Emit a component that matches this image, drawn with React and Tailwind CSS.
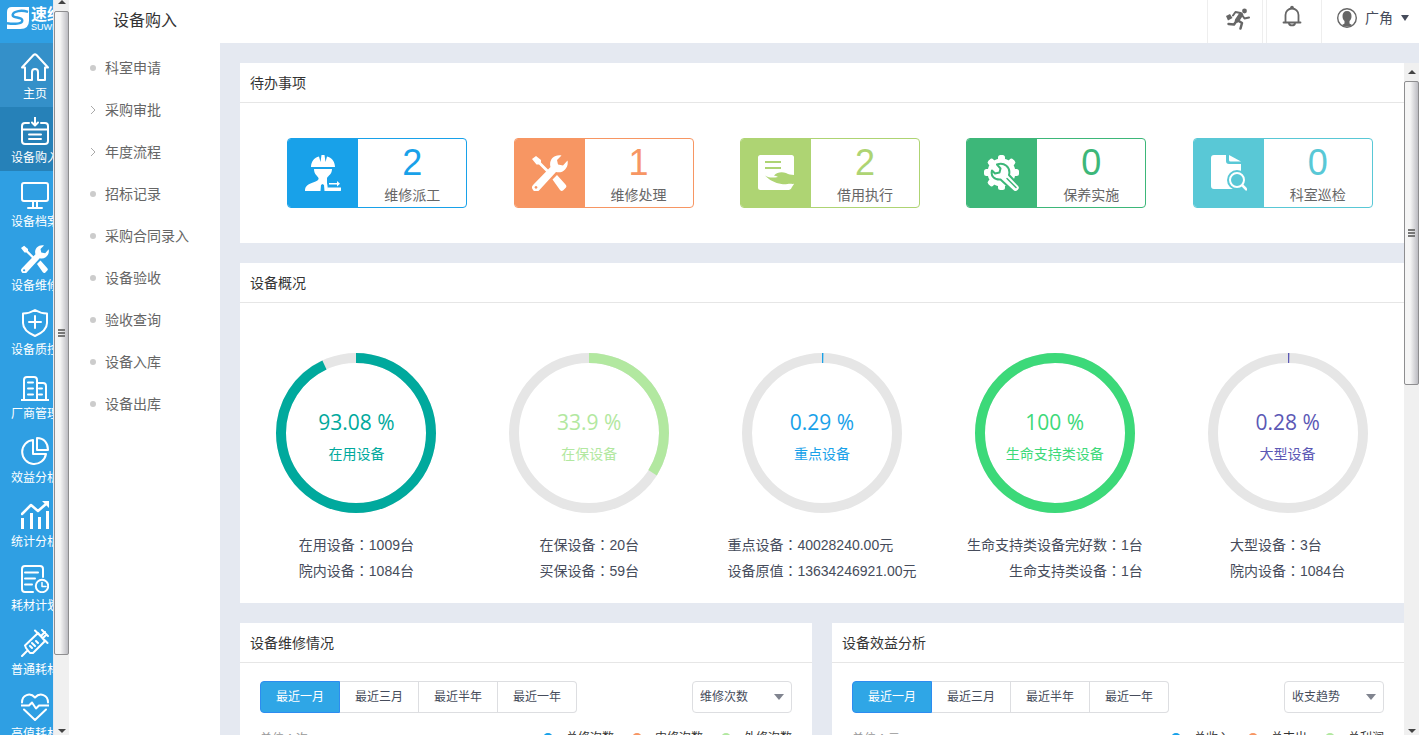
const stroke = {
  fill: "none",
  stroke: "currentColor",
  strokeWidth: 2,
  strokeLinecap: "round",
  strokeLinejoin: "round",
};

function SideIcon({ children }) {
  return (
    <svg className="size-7" viewBox="0 0 28 28" {...stroke} aria-hidden="true">
      {children}
    </svg>
  );
}

function Tools() {
  return (
    <g fill="#fff" stroke="none">
      <path d="M0 4 4 1l5 4v2.500l9 9-2 2-9-9H4.500z" />
      <path d="M20.500 24.500 25 20l8.500 9.500q1.500 1.500.5 3l-3 3q-1.500 1-3-.5z" />
      <path
        fillRule="evenodd"
        d="M29.500.5C22-1 16.500 5 18.500 12L1.500 29.500a4 4 0 0 0 5.500 6L24 17c7 2 13-4.500 11.500-11.500L31 10.500l-5-1-1-4.500zM4 31a1.400 1.400 0 1 1-.01 0z"
      />
    </g>
  );
}

const navItems = [
  {
    label: "主页",
    bg: "bg-[#3490c9]",
    icon: <path d="M1 14.500 12.500 2q1.500-1.300 3 0L27 14.500h-3V27h-7v-8a3 3 0 0 0-6 0v8H4V14.500z" />,
  },
  {
    label: "设备购入",
    bg: "bg-[#2681b8]",
    icon: (
      <>
        <path d="M8 6H4a3 3 0 0 0-3 3v15a3 3 0 0 0 3 3h20a3 3 0 0 0 3-3V9a3 3 0 0 0-3-3h-4M1 12.500h26M8 17.500h12M8 22h12" />
        <path d="M14 0v8M11 5.500l3 3 3-3" />
      </>
    ),
  },
  {
    label: "设备档案",
    icon: (
      <>
        <rect x="1" y="2" width="26" height="18" rx="2" />
        <path d="M12 21v5M16 21v5M7 27h14" />
      </>
    ),
  },
  {
    label: "设备维修",
    icon: (
      <g transform="scale(.78)">
        <Tools />
      </g>
    ),
  },
  {
    label: "设备质控",
    icon: (
      <path d="M14 1c4 2.500 8 3.500 12 3.500V14c0 6-5 10-12 13C7 24 2 20 2 14V4.500C6 4.500 10 3.500 14 1zM14 7v12M8 13h12" />
    ),
  },
  {
    label: "厂商管理",
    icon: (
      <path d="M0 27h28M3 27V7a3 3 0 0 1 3-3h7a3 3 0 0 1 3 3v20M16 10h6a3 3 0 0 1 3 3v14M7 9.500h5M7 15.500h5M7 21.500h5M18 15.500h3M18 21.500h3" />
    ),
  },
  {
    label: "效益分析",
    icon: (
      <>
        <path d="M12 3a12 12 0 1 0 13 14H12z" />
        <path d="M16 1v12h11C27 6 23 1 16 1z" />
      </>
    ),
  },
  {
    label: "统计分析",
    icon: (
      <>
        <path d="M1 13 10 4l7 6 8-7" strokeWidth="2.500" />
        <path d="M21 0h7v7z" fill="currentColor" stroke="none" />
        <path d="M1.500 17v11M10.500 12v16M18.500 16v12M26.500 10v18" strokeWidth="3" strokeLinecap="butt" />
      </>
    ),
  },
  {
    label: "耗材计划",
    icon: (
      <>
        <path d="M12 27H4a3 3 0 0 1-3-3V4a3 3 0 0 1 3-3h15a3 3 0 0 1 3 3v8M4 7.500h13M4 13.500h10M4 19.500h7" />
        <circle cx="21" cy="21" r="6.200" />
        <path d="M21 17.500V21.500h4" strokeWidth="1.500" />
      </>
    ),
  },
  {
    label: "普通耗材",
    icon: (
      <path d="m1 27 5-5M5 19l4 5h3L24 12l-7-8L4 16.500zM14 1.500 26.500 14M20 7l4-4M21 1l6 6M11 19l-2-2M14 17l-3-3M17 14l-2-2M22 9l3-3" />
    ),
  },
  {
    label: "高值耗材",
    icon: (
      <>
        <path d="M1 9.500C1 2 9-1 14 4.500 19-1 27 2 27 9.500" />
        <path d="M0 12.500h8l3-3 4 6 3-3h10M3 16.500l11 10.500 11-10.500" />
      </>
    ),
  },
];

const subItems = [
  { label: "科室申请" },
  { label: "采购审批", group: true },
  { label: "年度流程", group: true },
  { label: "招标记录" },
  { label: "采购合同录入" },
  { label: "设备验收" },
  { label: "验收查询" },
  { label: "设备入库" },
  { label: "设备出库" },
];

const todos = [
  {
    label: "维修派工",
    count: 2,
    border: "border-[#18a1e9]",
    fill: "bg-[#18a1e9]",
    color: "text-[#18a1e9]",
    icon: (
      <>
        <path d="M6 12C6 6.500 9.500 2.500 14 1.500L15.500 7 16.500 0h3L20.500 7 22 1.500C26.500 2.500 30 6.500 30 12z" />
        <path d="M9 14h18c0 5-3.500 6.500-5 9v5l1 8h-3.500l-.5-6-1.500-1-1.500 1-.5 6H0c0-5 2.500-6.500 8-8.500 4-1.500 6-2.500 5.500-4.500C12 20.500 9 19 9 14z" />
        <path d="M22.500 28v4.500H36q1 3-1 3.500H22zM24 28h8v-2l3 2.800-3 2.700v-2h-8z" />
      </>
    ),
  },
  {
    label: "维修处理",
    count: 1,
    border: "border-[#f79663]",
    fill: "bg-[#f79663]",
    color: "text-[#f79663]",
    icon: <Tools />,
  },
  {
    label: "借用执行",
    count: 2,
    border: "border-[#aed473]",
    fill: "bg-[#aed473]",
    color: "text-[#aed473]",
    icon: (
      <>
        <path d="M2.500 0h31Q36 0 36 2.500V29l-2 3q-1 3-3 3H2.500Q0 35 0 32.500v-30Q0 0 2.500 0z" />
        <path
          fill="currentColor"
          d="M7 6h16v2H7zM7 12h16v2H7zM7 20.500c4 2.500 8 2.500 13 1.500-1-1-3-1-4-1.500 3-3.500 8-4 12-2.500 3 1.500 5 2 8.500 2v8.500l-2 .5c-4-1-6 1-11 0C17 28 11 25 7 20.500z"
        />
      </>
    ),
  },
  {
    label: "保养实施",
    count: 0,
    border: "border-[#3db779]",
    fill: "bg-[#3db779]",
    color: "text-[#3db779]",
    icon: (
      <>
        <circle cx="17.500" cy="17.500" r="14" />
        {[0, 45, 90, 135].map((angle) => (
          <rect key={angle} x="14" width="7" height="35" rx="2.500" transform={`rotate(${angle} 17.500 17.500)`} />
        ))}
        <path
          stroke="currentColor"
          strokeWidth="2"
          strokeLinejoin="round"
          d="M13 9.500l3.500 4-1 4-4.500 1-3-3c-1.500 5 2 9.500 8.500 9L29 36c3 3 9-2 6-5.500L25 20C27 12 20 7 13 9.500z"
        />
        <path stroke="currentColor" strokeWidth="1.500" strokeLinecap="round" d="m23 23.500 9 9" />
      </>
    ),
  },
  {
    label: "科室巡检",
    count: 0,
    border: "border-[#59c8d6]",
    fill: "bg-[#59c8d6]",
    color: "text-[#59c8d6]",
    icon: (
      <>
        <path d="M3 0h12v6q0 3 3 3h12v25H3q-3 0-3-3V3q0-3 3-3z" />
        <path d="M18 0v5q0 1.500 1.500 1.500H30z" />
        <circle cx="26" cy="25" r="10" fill="currentColor" />
        <circle cx="26" cy="25" r="7" fill="none" stroke="#fff" strokeWidth="2" />
        <path d="m31 30 5 5" stroke="#fff" strokeWidth="2.500" />
      </>
    ),
  },
];

const overview = [
  {
    label: "在用设备",
    value: 93.08,
    color: "text-[#00a99d]",
    lines: [
      ["在用设备", "1009台"],
      ["院内设备", "1084台"],
    ],
  },
  {
    label: "在保设备",
    value: 33.9,
    color: "text-[#b2e8a0]",
    lines: [
      ["在保设备", "20台"],
      ["买保设备", "59台"],
    ],
  },
  {
    label: "重点设备",
    value: 0.29,
    color: "text-[#18a1e9]",
    lines: [
      ["重点设备", "40028240.00元"],
      ["设备原值", "13634246921.00元"],
    ],
  },
  {
    label: "生命支持类设备",
    value: 100,
    color: "text-[#3cd979]",
    align: "text-right",
    lines: [
      ["生命支持类设备完好数", "1台"],
      ["生命支持类设备", "1台"],
    ],
  },
  {
    label: "大型设备",
    value: 0.28,
    color: "text-[#5b58b5]",
    lines: [
      ["大型设备", "3台"],
      ["院内设备", "1084台"],
    ],
  },
];

const ranges = ["最近一月", "最近三月", "最近半年", "最近一年"];

// the TC face centres the full-width colon in its box
function Colon() {
  return <span className="font-['Noto_Sans_CJK_TC',sans-serif]">：</span>;
}

function Arrow({ down }) {
  return (
    <svg className="w-2 h-1" viewBox="0 0 8 4" fill="#444" aria-hidden="true">
      <path d={down ? "M0 0h8L4 4z" : "M0 4h8L4 0z"} />
    </svg>
  );
}

function ScrollBar({ thumb, top }) {
  return (
    <div className="w-[15px] shrink-0 flex flex-col items-center bg-[#f0f0f0]">
      <div className={`${top} shrink-0 flex`}>
        <Arrow />
      </div>
      <div className="w-full flex-1 min-h-0">
        <div
          className={`${thumb} w-full flex flex-col items-center justify-center gap-px rounded-xs border border-[#8e8e90] bg-linear-to-r from-[#f5f5f5] from-40% to-[#bcbcc2]`}
        >
          <span className="w-[7px] h-0.5 bg-[#777]" />
          <span className="w-[7px] h-0.5 bg-[#777]" />
          <span className="w-[7px] h-0.5 bg-[#777]" />
        </div>
      </div>
      <div className="h-2 shrink-0 flex items-center">
        <Arrow down />
      </div>
    </div>
  );
}

function Logo() {
  return (
    <a href="#" className="h-[43px] w-20 pl-[7px] pt-[7px] flex gap-0.5 text-white">
      <svg className="size-[22px] shrink-0" viewBox="0 0 23 23" aria-hidden="true">
        <path d="M5 0h18v14q0 9-9 9H0V5q0-5 5-5z" fill="#fff" />
        <path
          d="M22 5C15 3 7 4 6 8c-1 4 10 2 10 6 0 4-9 4-16 3"
          fill="none"
          stroke="#2f9fe3"
          strokeWidth="2.500"
        />
      </svg>
      <span className="flex flex-col font-bold text-base leading-4 whitespace-nowrap">
        速维
        <span className="text-[9px] leading-2 font-normal">SUWEI</span>
      </span>
    </a>
  );
}

function Sidebar() {
  return (
    <nav className="w-[53px] mr-px shrink-0 overflow-hidden bg-[#2f9fe3] text-white">
      <Logo />
      {navItems.map((item) => (
        <a
          key={item.label}
          href="#"
          className={`w-[70px] h-16 pt-2.5 flex flex-col items-center gap-1 text-xs leading-[18px] ${item.bg ?? ""}`}
        >
          <SideIcon>{item.icon}</SideIcon>
          {item.label}
        </a>
      ))}
    </nav>
  );
}

function SubMenu() {
  return (
    <aside className="w-[151px] pl-px shrink-0 bg-white">
      <h2 className="h-[42px] mb-[5px] flex items-center justify-center text-base text-[#333]">
        设备购入
      </h2>
      <ul className="text-sm text-[#666]">
        {subItems.map((item) => (
          <li key={item.label}>
            <a href="#" className="h-[42px] pl-[18px] flex items-center gap-2">
              <span className="w-[9px] flex justify-center">
                {item.group ? (
                  <svg className="w-1.5 h-2.5" viewBox="0 0 6 10" fill="none" stroke="#aaa">
                    <path d="m1 1 4 4-4 4" />
                  </svg>
                ) : (
                  <span className="size-1.5 rounded-full bg-[#ccc]" />
                )}
              </span>
              {item.label}
            </a>
          </li>
        ))}
      </ul>
    </aside>
  );
}

function Header() {
  return (
    <header className="h-[43px] shrink-0 flex justify-end bg-white text-[#666]">
      <button
        aria-label="退出"
        className="w-14 mr-[3px] pl-1.5 pb-1.5 border-x border-[#eee] flex items-center justify-center"
      >
        <svg className="w-6 h-[22px]" viewBox="0 0 24 22" {...stroke} strokeWidth="2.500">
          <circle cx="18.500" cy="3" r="2.400" fill="currentColor" stroke="none" />
          <path d="m15 6.500-4 6" strokeWidth="4.500" />
          <path d="M14.500 5 9.500 4 7 7.500M16 7l2.500 3.500 4.500-1" strokeWidth="2" />
          <path d="m12 12.500 4 2.500-1.500 5.500M10.500 13 8 16.500 2.500 16" />
          <path d="m0 8 4-2 2.500 4L2 12.500z" fill="currentColor" stroke="none" />
        </svg>
      </button>
      <button
        aria-label="消息"
        className="w-14 pr-1 pb-3 border-x border-[#eee] flex items-center justify-center"
      >
        <svg className="w-5 h-[22px]" viewBox="0 0 20 22" {...stroke} strokeWidth="1.800">
          <circle cx="10" cy="2.500" r="1.800" fill="currentColor" stroke="none" />
          <path d="M1.500 17.500h17M3.500 17V10a6.500 6.500 0 0 1 13 0v7M7 18.500c.5 2.500 5.500 2.500 6 0" />
        </svg>
      </button>
      <button className="pl-[15px] pr-2.5 pb-2 flex items-center gap-2 text-sm text-[#464c5b]">
        <svg className="size-5" viewBox="0 0 20 20" fill="none" stroke="#666">
          <circle cx="10" cy="10" r="9.300" strokeWidth="1.400" />
          <path
            d="M10 3c3 0 4.500 2 4.500 5s-1 4-2 5v2.500l2.500 1.500c-2.500 2-7.500 2-10 0l2.500-1.500V13c-1-1-2-2-2-5s1.500-5 4.500-5z"
            fill="#666"
            stroke="none"
          />
        </svg>
        广角
        <svg className="w-2 h-1.5" viewBox="0 0 8 6" fill="#464c5b">
          <path d="M0 0h8L4 6z" />
        </svg>
      </button>
    </header>
  );
}

function Panel({ title, children }) {
  return (
    <section className="flex-1 bg-white">
      <h3 className="h-10 px-2.5 flex items-center border-b border-[#e6e6e6] text-sm text-[#333]">
        {title}
      </h3>
      {children}
    </section>
  );
}

function TodoCard({ todo }) {
  return (
    <a href="#" className={`w-[180px] h-[70px] flex overflow-hidden rounded border ${todo.border}`}>
      <span className={`w-[70px] flex items-center justify-center ${todo.fill} ${todo.color}`}>
        <svg className="size-9" viewBox="0 0 36 36" fill="#fff" aria-hidden="true">
          {todo.icon}
        </svg>
      </span>
      <span className="flex-1 flex flex-col items-center">
        <span className={`text-4xl leading-12 ${todo.color}`}>{todo.count}</span>
        <span className="text-sm leading-4 text-[#666]">{todo.label}</span>
      </span>
    </a>
  );
}

function Donut({ item }) {
  return (
    <div className="flex-1 flex flex-col items-center">
      <div className={`grid place-items-center *:[grid-area:1/1] ${item.color}`}>
        <svg className="size-40 -rotate-90" viewBox="0 0 160 160" fill="none" strokeWidth="10">
          <circle cx="80" cy="80" r="75" stroke="#e6e6e6" />
          <circle
            cx="80"
            cy="80"
            r="75"
            stroke="currentColor"
            pathLength="100"
            strokeDasharray={`${item.value} 100`}
          />
        </svg>
        <div className="pt-[5px] flex flex-col items-center gap-1">
          <span className="font-['Open_Sans'] text-[21px] leading-8">{item.value} %</span>
          <span className="text-sm leading-6">{item.label}</span>
        </div>
      </div>
      <div className={`mt-[18px] text-sm leading-[26px] text-[#464c5b] ${item.align ?? ""}`}>
        {item.lines.map(([name, amount]) => (
          <p key={name} className="h-[26px]">
            {name}
            <Colon />
            {amount}
          </p>
        ))}
      </div>
    </div>
  );
}

function ChartPanel({ title, option, unit, legend }) {
  const dots = ["bg-[#18a1e9]", "bg-[#f79663]", "bg-[#b2e8a0]"];

  return (
    <Panel title={title}>
      <div className="px-5 pt-[18px] pb-40 text-xs text-[#464c5b]">
        <div className="flex justify-between">
          <div className="flex">
            {ranges.map((range, i) => (
              <button
                key={range}
                className={
                  i === 0
                    ? "w-20 h-8 rounded-l border border-[#2d8cf0] bg-[#2fa6e6] text-white"
                    : "w-[79px] h-8 border border-l-0 border-[#dddee1] last:rounded-r"
                }
              >
                {range}
              </button>
            ))}
          </div>
          <div className="relative">
            <select
              aria-label={title}
              className="w-[100px] h-8 pl-[7px] appearance-none rounded border border-[#dddee1] bg-white"
            >
              <option>{option}</option>
            </select>
            <svg
              className="absolute right-2 top-[13px] w-2.5 h-1.5 pointer-events-none"
              viewBox="0 0 10 6"
              fill="#80848f"
            >
              <path d="M0 0h10L5 6z" />
            </svg>
          </div>
        </div>
        <div className="mt-[17px] flex justify-between leading-4">
          <span className="h-4 text-[#999]">
            单位
            <Colon />
            {unit}
          </span>
          <div className="flex gap-[18px] text-[#333]">
            {legend.map((name, i) => (
              <span key={name} className="flex items-center gap-[13px]">
                <span className={`size-2.5 rounded-full ${dots[i]}`} />
                {name}
              </span>
            ))}
          </div>
        </div>
      </div>
    </Panel>
  );
}

export default function App() {
  return (
    <div className="h-screen flex overflow-hidden bg-[#e5e9f1] font-['Liberation_Sans','Noto_Sans_CJK_SC',sans-serif]">
      <Sidebar />
      <ScrollBar top="h-[11px]" thumb="h-[90%]" />
      <SubMenu />
      <div className="flex-1 min-w-0 flex flex-col">
        <Header />
        <div className="flex-1 min-h-0 pt-5 pl-5 flex">
          <main className="flex-1 min-w-0 overflow-hidden flex flex-col gap-5">
            <div className="flex shrink-0">
              <Panel title="待办事项">
                <div className="py-[35px] pl-6 pr-2 flex justify-around">
                  {todos.map((todo) => (
                    <TodoCard key={todo.label} todo={todo} />
                  ))}
                </div>
              </Panel>
            </div>
            <div className="flex shrink-0">
              <Panel title="设备概况">
                <div className="pt-[50px] pb-5 flex">
                  {overview.map((item) => (
                    <Donut key={item.label} item={item} />
                  ))}
                </div>
              </Panel>
            </div>
            <div className="flex shrink-0 gap-5">
              <ChartPanel
                title="设备维修情况"
                option="维修次数"
                unit="次"
                legend={["总修次数", "内修次数", "外修次数"]}
              />
              <ChartPanel
                title="设备效益分析"
                option="收支趋势"
                unit="元"
                legend={["总收入", "总支出", "总利润"]}
              />
            </div>
          </main>
          <ScrollBar top="h-[18px] pt-[7px]" thumb="h-[47%]" />
        </div>
      </div>
    </div>
  );
}
